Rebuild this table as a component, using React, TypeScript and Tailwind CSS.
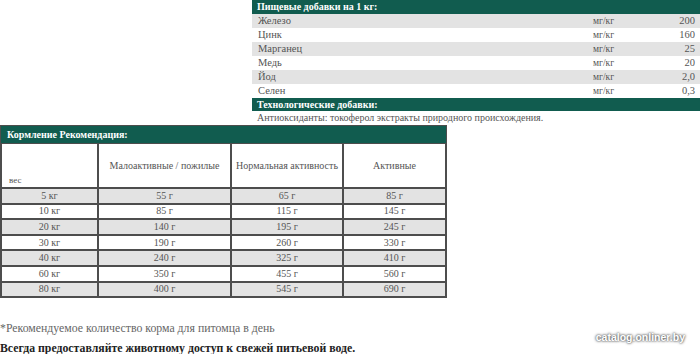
import React from "react";

const additives = [
  { name: "Железо", unit: "мг/кг", value: "200" },
  { name: "Цинк", unit: "мг/кг", value: "160" },
  { name: "Марганец", unit: "мг/кг", value: "25" },
  { name: "Медь", unit: "мг/кг", value: "20" },
  { name: "Йод", unit: "мг/кг", value: "2,0" },
  { name: "Селен", unit: "мг/кг", value: "0,3" },
];

const feeding = [
  ["5 кг", "55 г", "65 г", "85 г"],
  ["10 кг", "85 г", "115 г", "145 г"],
  ["20 кг", "140 г", "195 г", "245 г"],
  ["30 кг", "190 г", "260 г", "330 г"],
  ["40 кг", "240 г", "325 г", "410 г"],
  ["60 кг", "350 г", "455 г", "560 г"],
  ["80 кг", "400 г", "545 г", "690 г"],
];

const serif = "font-['Liberation_Serif',serif]";

export default function App() {
  return (
    <div className={`relative w-[700px] h-[354px] overflow-hidden bg-white text-[#555] ${serif}`}>
      {/* Additives block */}
      <div className="pl-[252px]">
        <div className="h-[14px] bg-[#115c4f] text-white font-bold text-[10px] leading-[14px] pl-[5px]">
          Пищевые добавки на 1 кг:
        </div>
        {additives.map((a, i) => (
          <div
            key={a.name}
            className={`grid grid-cols-[341px_1fr_auto] h-[14px] text-[10.5px] leading-[14px] ${
              i % 2 === 0 ? "bg-[#e3e3e3]" : "bg-white"
            }`}
          >
            <span className="pl-[6px]">{a.name}</span>
            <span className="text-[9.5px]">{a.unit}</span>
            <span className="pr-[5px] text-right">{a.value}</span>
          </div>
        ))}
        <div className="h-[13px] bg-[#115c4f] text-white font-bold text-[10px] leading-[13px] pl-[5px]">
          Технологические добавки:
        </div>
        <div className="h-[14px] text-[10px] leading-[14px] pl-[5px]">
          Антиоксиданты: токоферол экстракты природного происхождения.
        </div>
      </div>

      {/* Feeding table */}
      <table className="w-[447px] border-separate border-spacing-0 border border-[#4d4d4d] text-[10px] leading-none table-fixed">
        <colgroup>
          <col className="w-[97px]" />
          <col className="w-[133px]" />
          <col className="w-[112px]" />
          <col />
        </colgroup>
        <thead>
          <tr>
            <th
              colSpan={4}
              className="h-[17px] bg-[#115c4f] text-white font-bold text-left pl-[6px] text-[10px]"
            >
              Кормление Рекомендация:
            </th>
          </tr>
          <tr>
            <td className="h-[45px] border border-[#4d4d4d] align-bottom text-left pl-[7px] pb-[2px] text-[9px]">
              вес
            </td>
            <td className="border border-[#4d4d4d] text-center whitespace-nowrap">Малоактивные / пожилые</td>
            <td className="border border-[#4d4d4d] text-center whitespace-nowrap">Нормальная активность</td>
            <td className="border border-[#4d4d4d] text-center">Активные</td>
          </tr>
        </thead>
        <tbody>
          {feeding.map((row, i) => (
            <tr key={row[0]} className={i % 2 === 0 ? "bg-[#e3e3e3]" : "bg-white"}>
              {row.map((c, j) => (
                <td key={j} className="h-[15.6px] border border-[#4d4d4d] text-center">
                  {c}
                </td>
              ))}
            </tr>
          ))}
        </tbody>
      </table>

      <div className="mt-[22px] text-[11.8px] leading-[16px] text-[#666]">
        *Рекомендуемое количество корма для питомца в день
      </div>
      <div className="mt-[4px] text-[11.8px] leading-[16px] font-bold text-[#222]">
        Всегда предоставляйте животному доступ к свежей питьевой воде.
      </div>

      {/* Watermark */}
      <div className="absolute right-[15px] bottom-[8px] font-['Liberation_Sans',sans-serif] font-bold text-[10.5px] text-white [text-shadow:0_0_3px_#555,0_0_2px_#555]">
        catalog.onliner.by
      </div>
    </div>
  );
}
